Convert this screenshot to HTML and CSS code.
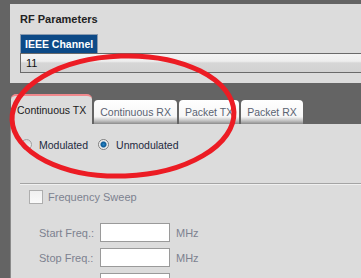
FILE: index.html
```html
<!DOCTYPE html>
<html lang="en">
<head>
    <meta charset="UTF-8">
    <title>RF Parameters</title>
    <link rel="stylesheet" href="styles.css">
</head>
<body>
    <div class="rf-panel">
        <h2>RF Parameters</h2>
        <div class="field-head">IEEE Channel</div>
        <div class="select-box">11</div>
    </div>

    <div class="tabs">
        <div class="tab active">Continuous TX</div>
        <div class="tab">Continuous RX</div>
        <div class="tab">Packet TX</div>
        <div class="tab">Packet RX</div>
    </div>

    <div class="tab-body">
        <div class="mode-row">
            <label class="radio"><span class="dot"></span>Modulated</label>
            <label class="radio"><span class="dot checked"></span>Unmodulated</label>
        </div>
        <hr class="divider">
        <div class="sweep">
            <label class="check"><span class="box"></span>Frequency Sweep</label>
            <div class="freq-grid">
                <span class="freq-label">Start Freq.:</span>
                <span class="freq-input"></span>
                <span class="unit">MHz</span>
                <span class="freq-label">Stop Freq.:</span>
                <span class="freq-input"></span>
                <span class="unit">MHz</span>
                <span class="freq-label"></span>
                <span class="freq-input"></span>
                <span class="unit"></span>
            </div>
        </div>
    </div>

    <!-- annotation drawn over the screenshot -->
    <svg class="mark" width="361" height="278" viewBox="0 0 361 278">
        <ellipse cx="123" cy="116" rx="111" ry="60" fill="none" stroke="#ec1c24" stroke-width="5" transform="rotate(-2 123 116)"/>
    </svg>
</body>
</html>
```

FILE: styles.css
```css
body {
    font-family: "Liberation Sans", Arial, sans-serif;
    font-size: 11px;
    background-color: #646464;
    margin: 0;
    padding: 4px 0 0 0;
    height: 274px;
    overflow: hidden;
    position: relative;
}
.rf-panel {
    background-color: #dcdcdc;
    margin-left: 10px;
    padding: 9px 0 9px 10px;
    height: 61px;
}
h2 {
    font-size: 11px;
    font-weight: bold;
    color: #222;
    margin: 0 0 8px 0;
    line-height: 13px;
}
.field-head {
    display: inline-block;
    background-color: #0d4a87;
    color: #fff;
    font-weight: bold;
    font-size: 10.5px;
    line-height: 18px;
    padding: 0 4px;
    border: 1px solid #8a9bb0;
    border-bottom: none;
}
.select-box {
    height: 18px;
    line-height: 18px;
    border: 1px solid #6a6a6a;
    border-right: none;
    padding-left: 5px;
    color: #111;
    background: linear-gradient(#f4f4f4, #eeeeee 40%, #d6d6d6 50%, #d2d2d2);
}
.tabs {
    display: flex;
    align-items: flex-end;
    gap: 2px;
    margin-top: 11px;
    padding-left: 11px;
    height: 30px;
    font-size: 10.5px;
}
.tab {
    height: 24px;
    line-height: 24px;
    padding: 0 6px;
    color: #5a6372;
    border-radius: 4px 4px 0 0;
    background: linear-gradient(#ffffff, #f6f6f6 70%, #bcbcbc 88%, #8a8a8a);
}
.tab.active {
    height: 30px;
    line-height: 29px;
    color: #1a1a1a;
    background: #dcdcdc;
    border-top: 2px solid #f0888c;
    border-radius: 5px 5px 0 0;
    box-sizing: border-box;
}
.tab-body {
    background-color: #dcdcdc;
    margin-left: 10px;
    border-left: 1px solid #8a8a8a;
    height: 140px;
    padding-top: 14px;
    overflow: hidden;
}
.mode-row {
    display: flex;
    gap: 10px;
    padding-left: 10px;
    color: #1e2a40;
    font-size: 10.5px;
}
.radio {
    display: flex;
    align-items: center;
    gap: 7px;
    height: 13px;
}
.dot {
    width: 9px;
    height: 9px;
    border-radius: 50%;
    border: 1px solid #a0a0a0;
    background: linear-gradient(#d4d4d4, #f6f6f6);
}
.dot.checked {
    background: radial-gradient(circle, #2a88c8 0, #0d5a96 2.5px, #e8e8e8 3.5px, #f6f6f6 4.5px);
    border-color: #7e7e7e;
}
.divider {
    border: none;
    border-top: 1px solid #a4a4a4;
    border-bottom: 1px solid #f0f0f0;
    margin: 32px 0 0 9px;
}
.sweep {
    color: #7d8290;
    padding-left: 18px;
}
.check {
    display: flex;
    align-items: center;
    gap: 5px;
    margin-top: 5px;
    height: 14px;
}
.box {
    width: 12px;
    height: 12px;
    border: 1px solid #aeaeae;
    background: linear-gradient(#f0f0f0, #fafafa);
}
.freq-grid {
    display: grid;
    grid-template-columns: 55px 70px auto;
    column-gap: 6px;
    row-gap: 6px;
    margin-top: 19px;
    padding-left: 10px;
    align-items: center;
}
.freq-label {
    white-space: nowrap;
}
.freq-input {
    height: 17px;
    background-color: #fff;
    border: 1px solid #9a9a9a;
}
.mark {
    position: absolute;
    left: 0;
    top: 0;
}
```
